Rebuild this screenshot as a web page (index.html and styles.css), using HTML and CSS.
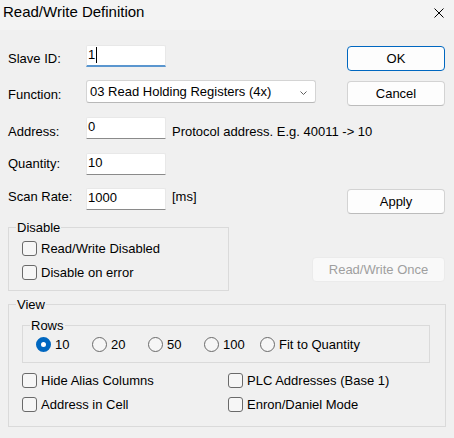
FILE: index.html
```html
<!DOCTYPE html>
<html>
<head>
<meta charset="utf-8">
<link rel="stylesheet" href="styles.css">
</head>
<body>
<div class="titlebar">
  <span class="title">Read/Write Definition</span>
  <svg class="close" viewBox="0 0 10 10" width="10" height="10"><path d="M0.5 0.5 L9.5 9.5 M9.5 0.5 L0.5 9.5" stroke="#000" stroke-width="1" fill="none"/></svg>
</div>
<div class="content">
  <div class="form">
    <span class="lbl l-slave">Slave ID:</span>
    <div class="field"><div class="input focus"><span>1</span><span class="caret"></span></div></div>
    <button class="btn default">OK</button>

    <span class="lbl l-func">Function:</span>
    <div class="field">
      <div class="combo"><span>03 Read Holding Registers (4x)</span><svg class="chev" viewBox="0 0 7 4" width="7" height="4"><path d="M0.5 0.5 L3.5 3.5 L6.5 0.5" stroke="#606060" stroke-width="1" fill="none"/></svg></div>
    </div>
    <button class="btn">Cancel</button>

    <span class="lbl l-addr">Address:</span>
    <div class="field wide"><div class="input"><span>0</span></div><span class="note n-addr">Protocol address. E.g. 40011 -&gt; 10</span></div>

    <span class="lbl l-qty">Quantity:</span>
    <div class="field"><div class="input"><span>10</span></div></div>
    <span></span>

    <span class="lbl l-scan">Scan Rate:</span>
    <div class="field"><div class="input"><span>1000</span></div><span class="note n-ms">[ms]</span></div>
    <button class="btn">Apply</button>
  </div>

  <div class="disable-row">
    <fieldset class="group disable">
      <legend>Disable</legend>
      <div class="inner col">
        <div class="check"><span class="box"></span><span>Read/Write Disabled</span></div>
        <div class="check"><span class="box"></span><span>Disable on error</span></div>
      </div>
    </fieldset>
    <button class="btn once" disabled>Read/Write Once</button>
  </div>

  <fieldset class="group view">
    <legend>View</legend>
    <div class="inner view-inner">
      <fieldset class="group rows">
        <legend>Rows</legend>
        <div class="inner radios">
          <div class="radio"><span class="dot on"></span><span>10</span></div>
          <div class="radio"><span class="dot"></span><span>20</span></div>
          <div class="radio"><span class="dot"></span><span>50</span></div>
          <div class="radio"><span class="dot"></span><span>100</span></div>
          <div class="radio last"><span class="dot"></span><span>Fit to Quantity</span></div>
        </div>
      </fieldset>
      <div class="checks">
        <div class="check"><span class="box"></span><span>Hide Alias Columns</span></div>
        <div class="check"><span class="box"></span><span>PLC Addresses (Base 1)</span></div>
        <div class="check"><span class="box"></span><span>Address in Cell</span></div>
        <div class="check"><span class="box"></span><span>Enron/Daniel Mode</span></div>
      </div>
    </div>
  </fieldset>
</div>
</body>
</html>
```
FILE: styles.css
```css
* { box-sizing: border-box; }
html, body { margin: 0; padding: 0; }
body {
  width: 454px;
  height: 438px;
  overflow: hidden;
  background: #f0f0f0;
  font-family: "Liberation Sans", Arial, sans-serif;
  font-size: 13px;
  line-height: 15px;
  color: #000;
}
.titlebar {
  height: 30px;
  background: #f3f3f3;
  display: flex;
  justify-content: space-between;
  align-items: flex-start;
  padding: 3px 10px 0 3px;
}
.title { font-size: 15px; line-height: 17px; }
.close { margin-top: 5px; display: block; }

.content { padding: 15px 9px 0 8px; }

.form {
  display: grid;
  grid-template-columns: 78px 1fr 98px;
  grid-template-rows: 35px 37px 36px 35px 26px;
  align-items: start;
}
.lbl { display: block; }
.l-slave { margin-top: 6px; }
.l-func { margin-top: 7px; }
.l-addr { margin-top: 7px; }
.l-qty { margin-top: 3px; }
.l-scan { margin-top: 1px; }

.field { display: flex; align-items: flex-start; gap: 6px; }
.field.wide { grid-column: 2 / 4; }
.note { display: block; white-space: nowrap; }
.n-addr { margin-top: 7px; }
.n-ms { margin-top: 1px; }

.input {
  flex: none;
  width: 80px;
  height: 22px;
  background: #fff;
  border: 1px solid #e8e8e8;
  border-bottom-color: #8a8a8a;
  border-radius: 2px 2px 0 0;
  padding: 1px 2px 0 1px;
  display: flex;
  align-items: flex-start;
}
.input.focus { border-bottom: 2px solid #5a96cf; }
.caret { display: block; width: 1px; height: 16px; background: #000; margin-left: 1px; }

.combo {
  flex: none;
  width: 230px;
  height: 23px;
  background: #fff;
  border: 1px solid #d4d4d4;
  border-bottom-color: #b8b8b8;
  border-radius: 3px;
  padding: 3px 8px 0 3px;
  display: flex;
  justify-content: space-between;
  align-items: flex-start;
}
.chev { display: block; margin-top: 7px; }

.btn {
  display: block;
  width: 98px;
  height: 25px;
  margin-top: 1px;
  padding: 0;
  background: #fdfdfd;
  border: 1px solid #d3d3d3;
  border-bottom-color: #bcbcbc;
  border-radius: 4px;
  font: inherit;
  color: #000;
}
.btn.default { border: 1px solid #0067c0; }
.btn.once {
  width: 133px;
  margin-top: 37px;
  background: #f9f9f9;
  border-color: #ebebeb;
  color: #9f9f9f;
}

.disable-row {
  display: flex;
  justify-content: space-between;
  align-items: flex-start;
  margin-top: 6px;
}

.group {
  margin: 0;
  padding: 0;
  min-width: 0;
  border: 1px solid #dadada;
}
.group legend {
  margin-left: 7px;
  padding: 0 1px;
  line-height: 15px;
}
.disable { width: 221px; }
.col {
  display: flex;
  flex-direction: column;
  gap: 9px;
}
.disable .inner { padding: 6px 13px 10px 13px; }

.check {
  display: flex;
  align-items: center;
  gap: 4px;
  height: 15px;
  white-space: nowrap;
}
.box {
  display: block;
  width: 15px;
  height: 15px;
  border: 1px solid #6a6a6a;
  border-radius: 3px;
  background: #f6f6f6;
  flex: none;
}

.view { margin-top: 6px; width: 438px; }
.view-inner { padding: 6px 14px 14px 13px; }
.rows { width: 408px; }
.radios {
  display: flex;
  padding: 4px 13px 10px 13px;
}
.radio {
  display: flex;
  align-items: center;
  gap: 4px;
  width: 56px;
  height: 15px;
  white-space: nowrap;
}
.radio.last { width: auto; }
.dot {
  display: block;
  width: 15px;
  height: 15px;
  border-radius: 50%;
  border: 1px solid #6a6a6a;
  background: #f6f6f6;
  flex: none;
}
.dot.on { border: 5px solid #0067c0; background: #fff; }

.checks {
  display: grid;
  grid-template-columns: 206px 1fr;
  row-gap: 9px;
  margin-top: 10px;
}
```
